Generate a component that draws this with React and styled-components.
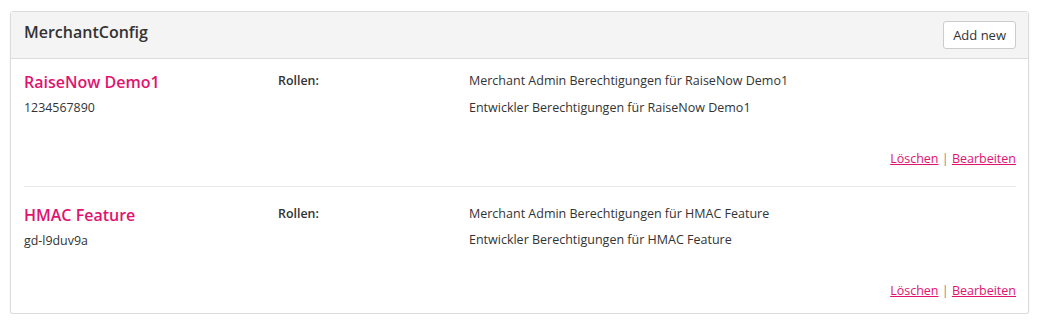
import React from "react";
import styled, { createGlobalStyle } from "styled-components";

const GlobalStyle = createGlobalStyle`
  body {
    margin: 0;
    background: #fff;
    font-family: "Open Sans", "Liberation Sans", sans-serif;
    color: #333;
  }
`;

const Page = styled.div`
  padding: 11px 21px 0 10px;
`;

const Panel = styled.section`
  border: 1px solid #dcdcdc;
  border-radius: 3px;
  box-shadow: 0 1px 2px rgba(0, 0, 0, 0.08);
  background: #fff;
`;

const PanelHeader = styled.header`
  display: flex;
  align-items: center;
  justify-content: space-between;
  height: 46px;
  padding: 0 12px 0 13px;
  background: #f4f4f4;
  border-bottom: 1px solid #dcdcdc;
`;

const Title = styled.h2`
  margin: 0 0 6px;
  font-size: 16px;
  font-weight: 600;
  color: #333;
`;

const Button = styled.button`
  font-family: inherit;
  font-size: 13px;
  color: #333;
  background: #fff;
  border: 1px solid #ccc;
  border-radius: 3px;
  height: 28px;
  padding: 0 9px;
  cursor: pointer;
`;

const PanelBody = styled.div`
  padding: 0 12px 0 13px;
`;

const Row = styled.div`
  padding: ${(p) => (p.first ? "12px" : "17px")} 0 ${(p) => (p.last ? "13px" : "18px")};
  border-bottom: ${(p) => (p.last ? "none" : "1px solid #e8e8e8")};
`;

const Columns = styled.div`
  display: grid;
  grid-template-columns: 254px 191px 1fr;
`;

const Name = styled.div`
  font-size: 16px;
  font-weight: 600;
  line-height: 22px;
  color: #e0136f;
`;

const Id = styled.div`
  margin-top: 6px;
  font-size: 12.4px;
  line-height: 18px;
`;

const Label = styled.div`
  font-size: 12.4px;
  font-weight: 600;
  line-height: 20px;
`;

const RoleList = styled.div`
  display: flex;
  flex-direction: column;
  gap: ${(p) => p.gap}px;
  font-size: 12.5px;
  line-height: 20px;
`;

const Actions = styled.div`
  margin-top: 32px;
  text-align: right;
  font-size: 12.5px;
  line-height: 18px;
  color: #888;
`;

const Link = styled.a`
  color: #e0136f;
  text-decoration: underline;
  cursor: pointer;
`;

const merchants = [
  {
    name: "RaiseNow Demo1",
    id: "1234567890",
    roles: [
      "Merchant Admin Berechtigungen für RaiseNow Demo1",
      "Entwickler Berechtigungen für RaiseNow Demo1",
    ],
  },
  {
    name: "HMAC Feature",
    id: "gd-l9duv9a",
    roles: [
      "Merchant Admin Berechtigungen für HMAC Feature",
      "Entwickler Berechtigungen für HMAC Feature",
    ],
  },
];

export default function App() {
  return (
    <Page>
      <GlobalStyle />
      <Panel>
        <PanelHeader>
          <Title>MerchantConfig</Title>
          <Button>Add new</Button>
        </PanelHeader>
        <PanelBody>
          {merchants.map((m, i) => (
            <Row key={m.id} first={i === 0} last={i === merchants.length - 1}>
              <Columns>
                <div>
                  <Name>{m.name}</Name>
                  <Id>{m.id}</Id>
                </div>
                <Label>Rollen:</Label>
                <RoleList gap={i === 0 ? 7 : 6}>
                  {m.roles.map((r) => (
                    <div key={r}>{r}</div>
                  ))}
                </RoleList>
              </Columns>
              <Actions>
                <Link>Löschen</Link> | <Link>Bearbeiten</Link>
              </Actions>
            </Row>
          ))}
        </PanelBody>
      </Panel>
    </Page>
  );
}
